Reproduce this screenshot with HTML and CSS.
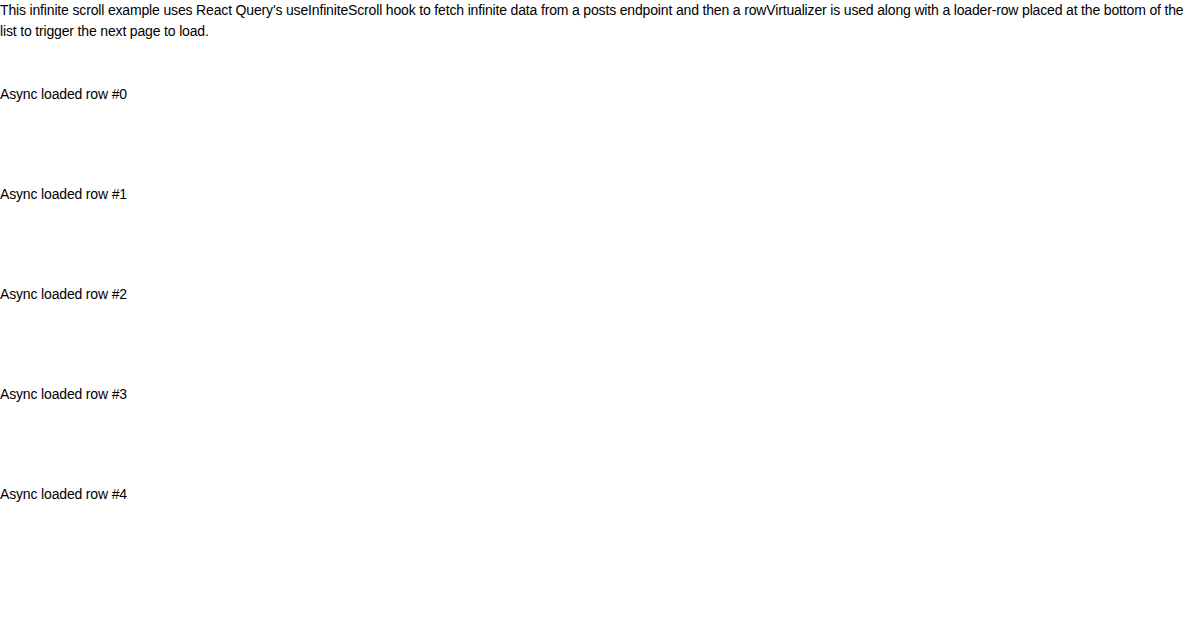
FILE: index.html
```html
<!DOCTYPE html>
<html>
<head>
<meta charset="utf-8">
<link rel="stylesheet" href="styles.css">
</head>
<body>
<p class="intro">This infinite scroll example uses React Query's useInfiniteScroll hook to fetch infinite data from a posts endpoint and then a rowVirtualizer is used along with a loader-row placed at the bottom of the list to trigger the next page to load.</p>
<div class="list">
  <div class="row">Async loaded row #0</div>
  <div class="row">Async loaded row #1</div>
  <div class="row">Async loaded row #2</div>
  <div class="row">Async loaded row #3</div>
  <div class="row">Async loaded row #4</div>
</div>
</body>
</html>
```
FILE: styles.css
```css
html, body {
  margin: 0;
  padding: 0;
  background: #fff;
}
body {
  font-family: "Liberation Sans", Arial, sans-serif;
  font-size: 14px;
  line-height: 21px;
  letter-spacing: -0.16px;
  color: #000;
  overflow: hidden;
}
.intro {
  margin: 0;
}
.list {
  margin-top: 42px;
}
.row {
  height: 100px;
}
```
